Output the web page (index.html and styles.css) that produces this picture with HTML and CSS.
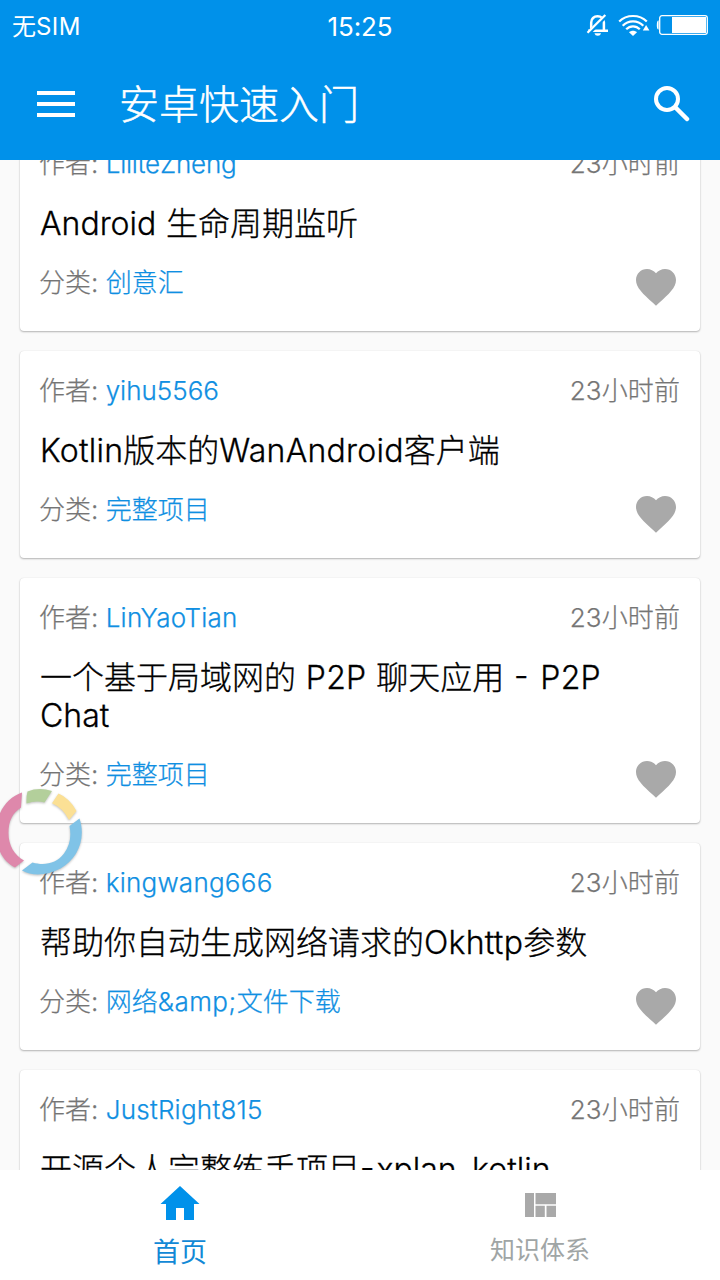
FILE: index.html
```html
<!DOCTYPE html>
<html lang="zh-CN">
<head>
<meta charset="utf-8">
<title>安卓快速入门</title>
<link rel="stylesheet" href="styles.css">
</head>
<body>
<svg class="defs" width="0" height="0">
  <symbol id="heart" viewBox="0 0 24 24"><path d="M12 21.35l-1.45-1.32C5.4 15.36 2 12.28 2 8.5 2 5.42 4.42 3 7.5 3c1.74 0 3.41.81 4.5 2.09C13.09 3.81 14.76 3 16.5 3 19.58 3 22 5.42 22 8.5c0 3.78-3.4 6.86-8.55 11.54L12 21.35z"/></symbol>
</svg>
<div class="app">
  <header class="header">
    <div class="status">
      <span class="carrier">无<span class="sim">SIM</span></span>
      <span class="clock">15:25</span>
      <span class="indicators">
        <svg class="bell" viewBox="0 0 24 24" width="24" height="24"><path d="M5.200 17V9.500C5.200 5.800 8 3.300 11.500 3.300c3.700 0 6.400 2.500 6.400 6.200V17" fill="none" stroke="#fff" stroke-width="2.500"/><path d="M2 16.500h20v2.500H2z" fill="#fff"/><path d="M8.500 20.300h6.500c-.4 1.700-1.600 2.500-3.200 2.500s-2.900-.8-3.300-2.500z" fill="#fff"/><path d="M2.300 20.600L20.600 2.300" stroke="#0091ea" stroke-width="4"/><path d="M1.500 19.800L19.300 2" stroke="#fff" stroke-width="2.300"/></svg>
        <svg class="wifi" viewBox="0 0 32 24" width="32" height="24"><g fill="none" stroke="#fff" stroke-width="2.200"><path d="M1.200 8.600C8.500 1.100 21.500 1.100 28.800 8.600"/><path d="M4.700 12.700c5.600-5.900 15-5.900 20.600 0"/><path d="M8.200 16.300c3.800-4 9.800-4 13.600 0"/></g><path d="M11 19.300c2.300-2 5.700-2 8 0L15 23z" fill="#fff"/><path d="M24.800 17.500l3.300-5.500 3.300 5.500z" fill="#fff"/></svg>
        <svg class="battery" viewBox="0 0 53 22" width="53" height="22"><path d="M2.600 6.500H2.200Q.8 7 .8 11t1.400 4.500h.4z" fill="#fff"/><rect x="3.700" y="1.700" width="47.600" height="18.600" rx="2.300" fill="none" stroke="#fff" stroke-width="1.300"/><rect x="16" y="3" width="34" height="16" fill="#fff"/></svg>
      </span>
    </div>
    <div class="toolbar">
      <svg class="menu" viewBox="0 0 38 26" width="38" height="26"><path d="M0 0h38v4H0zM0 11h38v4H0zM0 22h38v4H0z" fill="#fff"/></svg>
      <h1 class="title">安卓快速入门</h1>
      <svg class="search" viewBox="0 0 36 36" width="36" height="36"><circle cx="13" cy="13" r="11" fill="none" stroke="#fff" stroke-width="4"/><path d="M21.500 21.500L33 33" stroke="#fff" stroke-width="4.500" stroke-linecap="round"/></svg>
    </div>
  </header>

  <main class="list">
    <div class="cards">
      <article class="card">
        <div class="meta"><p>作者: <a class="tight">LiliteZheng</a></p><time>23小时前</time></div>
        <h2 class="headline">Android 生命周期监听</h2>
        <div class="foot"><p>分类: <a>创意汇</a></p><svg class="heart"><use href="#heart"/></svg></div>
      </article>
      <article class="card">
        <div class="meta"><p>作者: <a>yihu5566</a></p><time>23小时前</time></div>
        <h2 class="headline"><span class="wide">Kotlin</span>版本的<span class="wide">WanAndroid</span>客户端</h2>
        <div class="foot"><p>分类: <a>完整项目</a></p><svg class="heart"><use href="#heart"/></svg></div>
      </article>
      <article class="card">
        <div class="meta"><p>作者: <a class="wide">LinYaoTian</a></p><time>23小时前</time></div>
        <h2 class="headline">一个基于局域网的 <span class="wide">P2P</span> 聊天应用 <span class="hyphen">-</span> <span class="wide">P2P</span><br>Chat</h2>
        <div class="foot"><p>分类: <a>完整项目</a></p><svg class="heart"><use href="#heart"/></svg></div>
      </article>
      <article class="card">
        <div class="meta"><p>作者: <a class="wide">kingwang666</a></p><time>23小时前</time></div>
        <h2 class="headline">帮助你自动生成网络请求的<span class="wide">Okhttp</span>参数</h2>
        <div class="foot"><p>分类: <a>网络<span class="amp">&amp;amp;</span>文件下载</a></p><svg class="heart"><use href="#heart"/></svg></div>
      </article>
      <article class="card">
        <div class="meta"><p>作者: <a class="wide">JustRight815</a></p><time>23小时前</time></div>
        <h2 class="headline">开源个人完整练手项目<span class="hyphen">-</span>xplan_kotlin</h2>
        <div class="foot"><p>分类: <a>完整项目</a></p><svg class="heart"><use href="#heart"/></svg></div>
      </article>
    </div>
  </main>

  <nav class="tabs">
    <a class="tab active">
      <svg class="home" viewBox="0 0 40 34" width="40" height="34"><path d="M20 0L.5 18H6v16h10V22h8v12h10V18h5.500z" fill="#0091ea"/></svg>
      <span>首页</span>
    </a>
    <a class="tab">
      <svg class="quilt" viewBox="0 0 31 24" width="31" height="24"><path d="M0 0h9v24H0zM10.500 0H31v11.200H10.500zM10.500 12.800h9.300V24h-9.300zM21.500 12.800H31V24h-9.500z" fill="#a9a9a9"/></svg>
      <span>知识体系</span>
    </a>
  </nav>

  <svg class="ring" viewBox="0 0 86 100" width="86" height="100">
    <path d="M22 12.500C7 17.500-4 33-4 52.500-4 69.500 4 82 15 87.500l9-7C14 75 8.500 65 8.500 53c0-13 4.500-20 12.500-25.500z" fill="#de88ab"/>
    <path d="M27.500 11.500Q39 7 52 11l-7.500 11.500Q36 20 26.500 23.500 26.200 16 27.500 11.500z" fill="#b3cf9b"/>
    <path d="M58.500 13.500Q70 18.500 76.500 31l-7.500 9Q63 28 52 23.300z" fill="#fbe095"/>
    <path d="M79.500 38.500c7 21-2.500 41-19 50-13 7-28 8-38.500 2l10.500-8c12 3.500 24 1 31.500-9 6-8 7.500-17 5.500-27.500z" fill="#80c3e7"/>
  </svg>
</div>
</body>
</html>
```
FILE: styles.css
```css
* { box-sizing: border-box; margin: 0; padding: 0; }
body {
  width: 720px;
  height: 1280px;
  overflow: hidden;
  background: #fafafa;
  font-family: Inter, "Noto Sans CJK SC", sans-serif;
  font-weight: 300;
}
svg { display: block; flex: none; }
.defs { position: absolute; }
.app { position: relative; height: 1280px; display: flex; flex-direction: column; }

.header { flex: none; height: 160px; background: #0091ea; color: #fff; }
.status {
  height: 50px;
  padding: 0 12px;
  display: grid;
  grid-template-columns: 1fr auto 1fr;
  align-items: center;
  font-size: 26px;
  font-weight: 400;
  line-height: 50px;
}
.carrier { font-size: 24px; padding-top: 1px; }
.sim { letter-spacing: .4px; }
.clock { padding-top: 2px; letter-spacing: -.1px; }
.indicators { display: flex; align-items: center; justify-content: flex-end; }
.bell { margin: -3px 8px 0 0; }
.wifi { margin: -3px 6px 0 0; }
.battery { margin: -3px -1px 0 0; }
.toolbar { height: 110px; display: flex; align-items: center; padding: 0 30px 0 37px; }
.menu { margin: 0 44px 3px 0; }
.title { font-size: 40px; font-weight: 300; line-height: 110px; flex: 1; -webkit-text-stroke: .5px; }
.search { margin-bottom: 3px; }

.list { flex: 1; min-height: 0; overflow: hidden; }
.cards { display: flex; flex-direction: column; gap: 20px; padding: 0 20px; margin-top: -36px; }
.card {
  flex: none;
  padding: 20px;
  background: #fff;
  border-radius: 4px;
  box-shadow: 0 1px 2px rgba(0, 0, 0, .28), 0 0 1px rgba(0, 0, 0, .12);
}
.meta, .foot {
  display: flex;
  justify-content: space-between;
  font-size: 26px;
  line-height: 40px;
  color: #757575;
  -webkit-text-stroke: .25px;
}
.meta { height: 40px; }
.foot { height: 48px; }
.meta p, .foot p { margin-left: -1px; }
.meta time { letter-spacing: .1px; }
.card a { color: #0f8fe2; }
.headline {
  margin: 21px 0 20px;
  font-size: 32px;
  font-weight: 300;
  line-height: 38px;
  word-spacing: .8px;
  color: #000;
  white-space: nowrap;
  -webkit-text-stroke: .3px;
}
.wide { letter-spacing: .25px; }
.tight { letter-spacing: -.2px; }
.amp { letter-spacing: .5px; }
.hyphen { letter-spacing: 2px; line-height: 0; vertical-align: 2px; }
.heart { width: 48px; height: 48px; fill: #a9a9a9; stroke: none; }

.tabs { flex: none; height: 110px; display: grid; grid-template-columns: 1fr 1fr; background: #fff; }
.tab { display: flex; flex-direction: column; align-items: center; font-weight: 400; font-size: 25px; line-height: 40px; color: #a0a5a5; }
.active { font-size: 27px; color: #1289d6; }
.home { margin: 16px 0 13px; }
.quilt { margin: 23px 0 13px; }

.ring { position: absolute; left: 0; top: 780px; filter: drop-shadow(0 1px 1px rgba(0, 0, 0, .25)); }
```
